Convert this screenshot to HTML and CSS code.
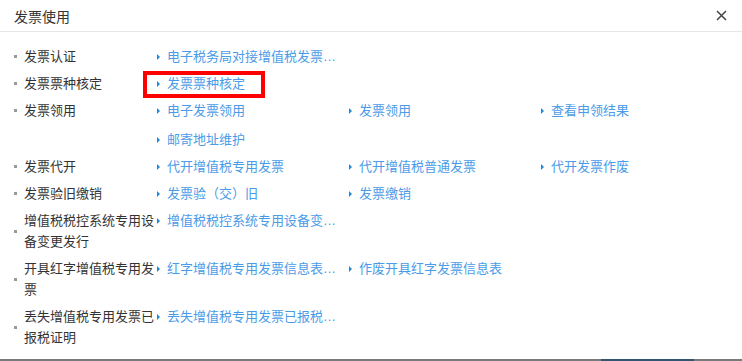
FILE: index.html
```html
<!DOCTYPE html>
<html lang="zh-CN">
<head>
    <meta charset="UTF-8">
    <title>发票使用</title>
    <link rel="stylesheet" href="styles.css">
</head>
<body>
    <div class="dialog">
        <div class="dialog-header">
            <span class="dialog-title">发票使用</span>
            <span class="close-btn">
                <svg width="11" height="11" viewBox="0 0 11 11"><path d="M1 1L10 10M10 1L1 10" stroke="#444" stroke-width="1.5" fill="none"/></svg>
            </span>
        </div>
        <div class="dialog-body">
            <div class="menu-row">
                <div class="menu-label"><span class="bullet"></span><span class="label-text">发票认证</span></div>
                <div class="menu-links">
                    <a class="menu-link"><span class="link-text">电子税务局对接增值税发票综合服务平台</span></a>
                </div>
            </div>
            <div class="menu-row">
                <div class="menu-label"><span class="bullet"></span><span class="label-text">发票票种核定</span></div>
                <div class="menu-links">
                    <a class="menu-link marked"><span class="link-text">发票票种核定</span></a>
                </div>
            </div>
            <div class="menu-row">
                <div class="menu-label"><span class="bullet"></span><span class="label-text">发票领用</span></div>
                <div class="menu-links">
                    <a class="menu-link"><span class="link-text">电子发票领用</span></a>
                    <a class="menu-link"><span class="link-text">发票领用</span></a>
                    <a class="menu-link"><span class="link-text">查看申领结果</span></a>
                    <a class="menu-link"><span class="link-text">邮寄地址维护</span></a>
                </div>
            </div>
            <div class="menu-row">
                <div class="menu-label"><span class="bullet"></span><span class="label-text">发票代开</span></div>
                <div class="menu-links">
                    <a class="menu-link"><span class="link-text">代开增值税专用发票</span></a>
                    <a class="menu-link"><span class="link-text">代开增值税普通发票</span></a>
                    <a class="menu-link"><span class="link-text">代开发票作废</span></a>
                </div>
            </div>
            <div class="menu-row">
                <div class="menu-label"><span class="bullet"></span><span class="label-text">发票验旧缴销</span></div>
                <div class="menu-links">
                    <a class="menu-link"><span class="link-text">发票验（交）旧</span></a>
                    <a class="menu-link"><span class="link-text">发票缴销</span></a>
                </div>
            </div>
            <div class="menu-row">
                <div class="menu-label"><span class="bullet"></span><span class="label-text">增值税税控系统专用设备变更发行</span></div>
                <div class="menu-links">
                    <a class="menu-link"><span class="link-text">增值税税控系统专用设备变更发行</span></a>
                </div>
            </div>
            <div class="menu-row">
                <div class="menu-label"><span class="bullet"></span><span class="label-text">开具红字增值税专用发票</span></div>
                <div class="menu-links">
                    <a class="menu-link"><span class="link-text">红字增值税专用发票信息表填开</span></a>
                    <a class="menu-link"><span class="link-text">作废开具红字发票信息表</span></a>
                </div>
            </div>
            <div class="menu-row">
                <div class="menu-label"><span class="bullet"></span><span class="label-text">丢失增值税专用发票已报税证明</span></div>
                <div class="menu-links">
                    <a class="menu-link"><span class="link-text">丢失增值税专用发票已报税证明单开具</span></a>
                </div>
            </div>
        </div>
    </div>
    <div class="taskbar">
        <span class="taskbar-active"></span>
    </div>
</body>
</html>
```

FILE: styles.css
```css
body {
    margin: 0;
    background-color: #fff;
    font-family: "Liberation Sans", "Noto Sans CJK SC", sans-serif;
    font-size: 13px;
    color: #333;
    height: 361px;
    display: flex;
    flex-direction: column;
}
.dialog {
    flex: 1;
}
.dialog-header {
    height: 31px;
    border-bottom: 1px solid #e6e6e6;
    padding: 0 14px;
    display: flex;
    align-items: center;
    justify-content: space-between;
}
.dialog-title {
    font-size: 14px;
    color: #333;
}
.close-btn {
    display: flex;
    margin-right: 1px;
}
.dialog-body {
    padding: 11px 0 0 14px;
}
.menu-row {
    display: flex;
    align-items: flex-start;
    padding: 3px 0;
    line-height: 21px;
}
.menu-label {
    width: 141px;
    display: flex;
    align-items: center;
    flex-shrink: 0;
}
.bullet {
    width: 3px;
    height: 3px;
    background-color: #999;
    margin-right: 7px;
    flex-shrink: 0;
}
.label-text {
    width: 131px;
}
.menu-links {
    display: flex;
    flex-wrap: wrap;
    row-gap: 8px;
    width: 576px;
}
.menu-link {
    width: 192px;
    display: flex;
    align-items: center;
    color: #4a9be8;
    cursor: pointer;
}
.menu-link::before {
    content: "";
    width: 0;
    height: 0;
    border-left: 3px solid #1e88d8;
    border-top: 3px solid transparent;
    border-bottom: 3px solid transparent;
    margin: 0 7px 0 2px;
    flex-shrink: 0;
}
.link-text {
    max-width: 172px;
    white-space: nowrap;
    overflow: hidden;
    text-overflow: ellipsis;
}
.marked {
    position: relative;
}
.marked::after {
    content: "";
    position: absolute;
    left: -12px;
    top: -2px;
    width: 114px;
    height: 19px;
    border: 4px solid #ff0000;
}
.taskbar {
    height: 2px;
    background-color: #7a7a7a;
    display: flex;
}
.taskbar-active {
    width: 93px;
    margin-left: 601px;
    background-color: #2f5573;
}
```
